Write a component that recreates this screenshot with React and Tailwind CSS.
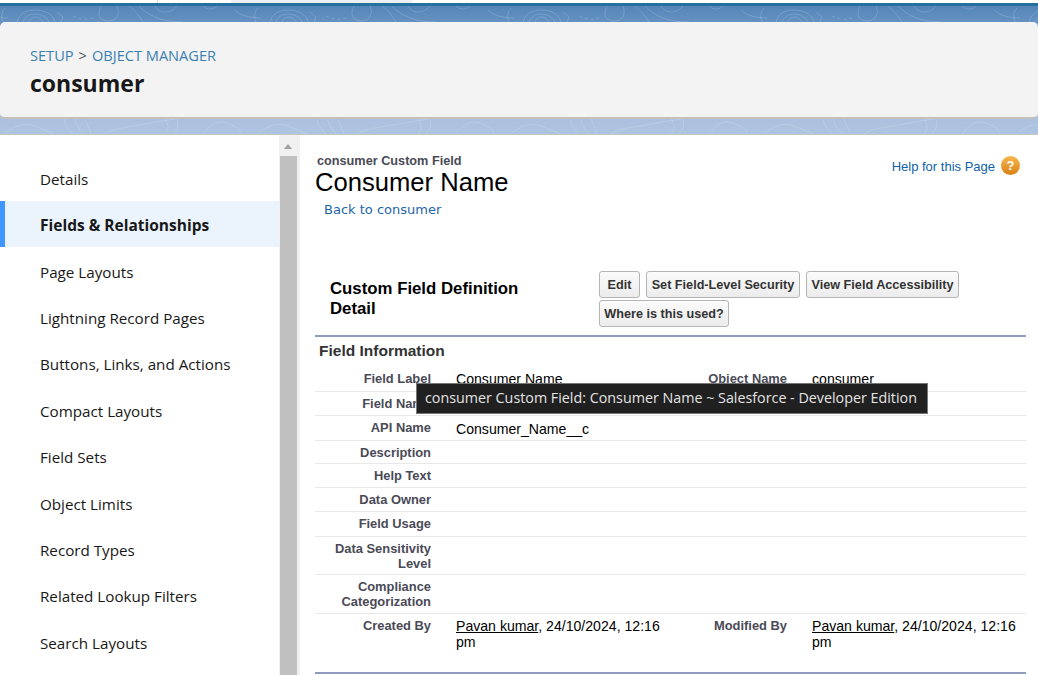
const nav = [
  "Details",
  "Fields & Relationships",
  "Page Layouts",
  "Lightning Record Pages",
  "Buttons, Links, and Actions",
  "Compact Layouts",
  "Field Sets",
  "Object Limits",
  "Record Types",
  "Related Lookup Filters",
  "Search Layouts",
];

function Row({ label, value, label2, value2, h, first, tight }) {
  const lp = first ? "pt-[5px]" : "pt-[4px]";
  const vp = tight ? "pt-[4px]" : "pt-[5px]";
  return (
    <div className={`flex border-b border-[#e8e8e8] ${h}`}>
      <div className={`w-[116px] ${lp} text-right text-[12.9px] leading-[15px] font-bold text-[#4a4a56]`}>{label}</div>
      <div className={`w-[232px] mr-[20px] pl-[25px] ${vp} text-[14.1px] leading-[16px] text-black`}>{value}</div>
      <div className={`w-[104px] ${lp} text-right text-[12.9px] leading-[15px] font-bold text-[#4a4a56]`}>{label2}</div>
      <div className={`flex-1 pl-[25px] ${vp} text-[14.1px] leading-[16px] text-black`}>{value2}</div>
    </div>
  );
}

function Btn({ children, className = "" }) {
  return (
    <span className={`inline-flex h-[27px] items-center justify-center rounded-[3px] border border-[#b5b5b5] bg-gradient-to-b from-[#fbfbfb] to-[#ececec] pt-[1px] text-[12.65px] font-bold whitespace-nowrap text-[#333] ${className}`}>
      {children}
    </span>
  );
}

function Pattern() {
  const offs = [-218, 35, 288, 541, 794, 1047];
  return (
    <svg className="absolute inset-0 h-full w-full" viewBox="0 0 1038 128" fill="none" stroke="#ffffff" strokeWidth="1">
      {offs.map((x) => (
        <g key={x} transform={`translate(${x} 0)`} strokeOpacity="0.17">
          <path d="M-18 16c2-8 8-12 18-12s18 4 20 12" />
          <path d="M-12 16c2-5 6-8 12-8s12 3 14 8" />
          <path d="M-6 16c1-3 3-5 6-5 4 0 6 2 8 5" />
          <path d="M22 6l6 5-2 5" />
          <path d="M38 10c8 4 14 4 20 2" strokeDasharray="3 3" />
          <path d="M66 0c-4 8-2 14 6 15 8 1 14-6 10-15" />
          <path d="M94 0c6 4 10 10 14 16 M104 0c10 10 22 16 44 16" />
          <path d="M120 0c4 8 16 8 22 0 M168 0c4 4 10 4 14 0" />
          <path d="M-30 2c-4 4-4 10-2 14 M200 4c6 6 16 8 26 8" />
        </g>
      ))}
      {offs.map((x) => (
        <g key={`b${x}`} transform={`translate(${x} 0)`} strokeOpacity="0.17">
          <path d="M-30 128c8-8 20-12 30-8s14 6 20 8" />
          <path d="M30 113c-2 4 4 11 8 15 M40 113c0 5 4 10 8 15 M50 113c2 5 4 10 6 15" />
          <path d="M70 128c8-6 20-6 40-10s26-4 30-5" />
          <path d="M130 113c4 6 4 11 0 15 M142 113c2 6 0 11-4 15" />
          <path d="M168 128c6-8 14-15 24-11s12 5 14 11" />
        </g>
      ))}
    </svg>
  );
}

export default function App() {
  return (
    <div className="relative h-[675px] w-[1038px] overflow-hidden bg-white font-['Liberation_Sans',Arial,sans-serif]">
      {/* top strip */}
      <div className="flex h-[3px] bg-white">
        <div className="ml-[157px] w-[74px] border-l border-[#dddddd] bg-white" />
        <div className="w-[181px] bg-[#ecf0f3]" />
      </div>
      <div className="h-[3px] bg-[#26709f]" />

      <div className="relative flex h-[128px] flex-col bg-[linear-gradient(to_bottom,#5585b8_0%,#6693c3_14%,#a9c0de_85%,#afc4e0_100%)]">
        <Pattern />
        <div className="relative mt-[16px] flex h-[97px] flex-col rounded-[5px] border-b-2 border-[#c4c0ba] bg-[#f3f3f3] pl-[30px] pt-[23px] font-['Open_Sans',sans-serif]">
          <div className="flex items-center text-[14.6px] leading-[20px] text-[#3b7fb0]">
            <span>SETUP</span>
            <span className="mx-[5px] text-[#555]">&gt;</span>
            <span>OBJECT MANAGER</span>
          </div>
          <div className="mt-[2px] text-[23px] leading-[32px] font-bold text-[#181818]">consumer</div>
        </div>
      </div>

      <div className="flex h-[541px] border-t border-[#c9c6c0]">
        {/* sidebar */}
        <div className="w-[279px] shrink-0 rounded-tl-[5px] bg-white pt-[19.6px] font-['Open_Sans',sans-serif]">
          {nav.map((n, i) => (
            <div
              key={n}
              className={`flex h-[46.4px] items-center pt-[3px] text-[#181818] ${
                i === 1
                  ? "border-l-[5px] border-[#3f97ff] bg-[#ebf4fd] pl-[35px] text-[15.5px] font-bold"
                  : "pl-[40px] text-[15.2px]"
              }`}
            >
              {n}
            </div>
          ))}
        </div>

        {/* scrollbar */}
        <div className="flex w-[21px] shrink-0 flex-col items-center border-r-[3px] border-[#f0f0f0] bg-[#f1f1f1] pt-[9px]">
          <div className="h-0 w-0 border-x-[4px] border-b-[5px] border-x-transparent border-b-[#a3a3a3]" />
          <div className="mt-[7px] w-[17px] flex-1 bg-[#c0c0c0]" />
        </div>

        {/* content */}
        <div className="flex-1 pl-[15px] pr-[12px]">
          <div className="flex justify-between pt-[19px]">
            <div>
              <div className="pl-[2px] text-[12.7px] leading-[14px] font-bold text-[#4a4a56]">consumer Custom Field</div>
              <div className="text-[25.6px] leading-[29px] text-black">Consumer Name</div>
              <div className="pl-[9px] pt-[4px] font-['DejaVu_Sans',sans-serif] text-[13px] leading-[18px] text-[#1e65a8]">Back to consumer</div>
            </div>
            <div className="flex items-start pr-[6px] pt-[2px]">
              <span className="mt-[3px] text-[13px] leading-[16px] text-[#0f62a8]">Help for this Page</span>
              <span className="ml-[6px] flex h-[19px] w-[19px] items-center justify-center rounded-full bg-gradient-to-b from-[#f7b84b] to-[#d9800f] text-[13px] font-bold text-white">?</span>
            </div>
          </div>

          <div className="mt-[52px] flex h-[66px] border-b-2 border-[#8e9dbe]">
            <div className="w-[284px] pl-[15px] pt-[8px] text-[16.8px] leading-[20px] font-bold text-black">
              Custom Field Definition<br />Detail
            </div>
            <div className="flex w-[370px] flex-wrap content-start gap-x-[6px] gap-y-[2px]">
              <Btn className="w-[41px]">Edit</Btn>
              <Btn className="w-[154px]">Set Field-Level Security</Btn>
              <Btn className="w-[153px]">View Field Accessibility</Btn>
              <Btn className="w-[130px]">Where is this used?</Btn>
            </div>
          </div>

          <div className="pl-[4px] pt-[4px] text-[15.5px] leading-[20px] font-bold text-[#333]">Field Information</div>

          <div className="mt-[5px]">
            <Row first h="h-[26px]" label="Field Label" value="Consumer Name" label2="Object Name" value2="consumer" />
            <Row h="h-[24px]" label="Field Name" />
            <Row h="h-[25px]" label="API Name" value="Consumer_Name__c" />
            <Row h="h-[23px]" label="Description" />
            <Row h="h-[24px]" label="Help Text" />
            <Row h="h-[24px]" label="Data Owner" />
            <Row h="h-[25px]" label="Field Usage" />
            <Row h="h-[38px]" label={<>Data Sensitivity<br />Level</>} />
            <Row h="h-[39px]" label={<>Compliance<br />Categorization</>} />
            <Row
              tight
              h="h-[60px] !border-b-2 !border-[#8e9dbe]"
              label="Created By"
              value={<><span className="underline">Pavan kumar</span>, 24/10/2024, 12:16 pm</>}
              label2="Modified By"
              value2={<><span className="underline">Pavan kumar</span>, 24/10/2024, 12:16 pm</>}
            />
          </div>
        </div>
      </div>

      {/* tooltip */}
      <div className="absolute left-[416px] top-[383px] flex h-[31px] w-[512px] items-center border border-[#767676] bg-[#202020] pb-[1px] pl-[8px] font-['Open_Sans',sans-serif] text-[14.3px] whitespace-nowrap text-[#e4e4e4]">
        consumer Custom Field: Consumer Name ~ Salesforce - Developer Edition
      </div>
    </div>
  );
}
